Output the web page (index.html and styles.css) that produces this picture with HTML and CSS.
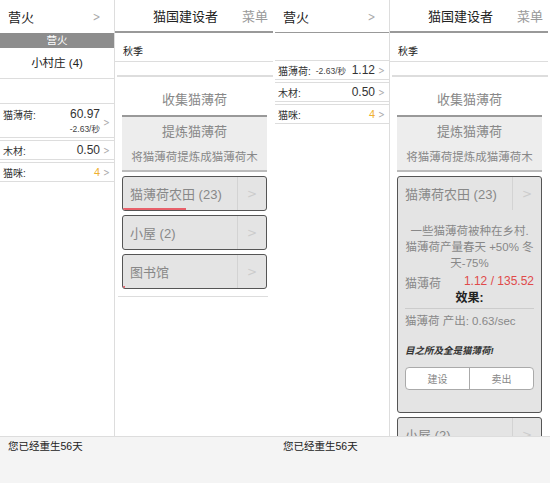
FILE: index.html
```html
<!DOCTYPE html>
<html lang="zh">
<head>
<meta charset="utf-8">
<link rel="stylesheet" href="styles.css">
</head>
<body>
<div class="screens">
  <div class="screen">
    <div class="cols">
      <aside class="side">
        <div class="side-head"><span>营火</span><span class="chev">&gt;</span></div>
        <div class="tab">营火</div>
        <div class="village">小村庄 (4)</div>
        <div class="res-list first">
          <div class="res tall">
            <span class="res-name">猫薄荷:</span>
            <span class="res-vals"><span class="res-val">60.97</span><span class="res-rate">-2.63/秒</span></span>
            <span class="chev small">&gt;</span>
          </div>
          <div class="res">
            <span class="res-name">木材:</span>
            <span class="res-vals"><span class="res-val">0.50</span></span>
            <span class="chev small">&gt;</span>
          </div>
          <div class="res">
            <span class="res-name">猫咪:</span>
            <span class="res-vals"><span class="res-val cat">4</span></span>
            <span class="chev small">&gt;</span>
          </div>
        </div>
      </aside>
      <main class="main">
        <div class="main-head"><span class="title">猫国建设者</span><span class="menu">菜单</span></div>
        <div class="season">秋季</div>
        <div class="blank"></div>
        <div class="content">
          <div class="gather">收集猫薄荷</div>
          <div class="refine">
            <div class="refine-title">提炼猫薄荷</div>
            <div class="refine-desc">将猫薄荷提炼成猫薄荷木</div>
          </div>
          <div class="bld">
            <div class="bld-row"><span class="bld-name">猫薄荷农田 (23)</span><span class="bld-more">&gt;</span></div>
            <div class="progress" style="width:63px"></div>
          </div>
          <div class="bld">
            <div class="bld-row"><span class="bld-name">小屋 (2)</span><span class="bld-more">&gt;</span></div>
          </div>
          <div class="bld">
            <div class="bld-row"><span class="bld-name">图书馆</span><span class="bld-more">&gt;</span></div>
            <div class="progress" style="width:2px"></div>
          </div>
        </div>
        <div class="end-line"></div>
      </main>
    </div>
    <footer class="foot">您已经重生56天</footer>
  </div>

  <div class="screen">
    <div class="cols">
      <aside class="side">
        <div class="side-head lined"><span>营火</span><span class="chev">&gt;</span></div>
        <div class="res-list second">
          <div class="res">
            <span class="res-name">猫薄荷:</span>
            <span class="res-rate inline">-2.63/秒</span>
            <span class="res-vals"><span class="res-val">1.12</span></span>
            <span class="chev small">&gt;</span>
          </div>
          <div class="res">
            <span class="res-name">木材:</span>
            <span class="res-vals"><span class="res-val">0.50</span></span>
            <span class="chev small">&gt;</span>
          </div>
          <div class="res">
            <span class="res-name">猫咪:</span>
            <span class="res-vals"><span class="res-val cat">4</span></span>
            <span class="chev small">&gt;</span>
          </div>
        </div>
      </aside>
      <main class="main">
        <div class="main-head"><span class="title">猫国建设者</span><span class="menu">菜单</span></div>
        <div class="season">秋季</div>
        <div class="blank"></div>
        <div class="content">
          <div class="gather">收集猫薄荷</div>
          <div class="refine">
            <div class="refine-title">提炼猫薄荷</div>
            <div class="refine-desc">将猫薄荷提炼成猫薄荷木</div>
          </div>
          <div class="bld open">
            <div class="bld-row"><span class="bld-name">猫薄荷农田 (23)</span><span class="bld-more">&gt;</span></div>
            <div class="detail">
              <p class="desc">一些猫薄荷被种在乡村.<br>猫薄荷产量春天 +50% 冬<br>天-75%</p>
              <div class="price"><span>猫薄荷</span><span class="need">1.12 / 135.52</span></div>
              <div class="effects">效果:</div>
              <div class="effect">猫薄荷 产出: 0.63/sec</div>
              <div class="flavor">目之所及全是猫薄荷!</div>
              <div class="actions"><span>建设</span><span>卖出</span></div>
            </div>
          </div>
          <div class="bld">
            <div class="bld-row"><span class="bld-name">小屋 (2)</span><span class="bld-more">&gt;</span></div>
          </div>
        </div>
      </main>
    </div>
    <footer class="foot">您已经重生56天</footer>
  </div>
</div>
</body>
</html>
```

FILE: styles.css
```css
* { box-sizing: border-box; }
html, body { margin: 0; padding: 0; background: #fff; }
body {
  font-family: "Liberation Sans", "Noto Sans CJK SC", sans-serif;
  color: #333;
  width: 550px;
  height: 483px;
  overflow: hidden;
}
.screens { display: flex; width: 550px; height: 483px; }
.screen { width: 275px; height: 483px; display: flex; flex-direction: column; }
.cols { flex: 1; display: flex; overflow: hidden; min-height: 0; }
.side { width: 115px; border-right: 1px solid #ddd; flex: none; }
.main { width: 160px; flex: none; padding-right: 2px; overflow: hidden; }

.side-head {
  height: 33px; display: flex; align-items: center; justify-content: space-between;
  padding: 0 12px 0 8px; font-size: 13px; color: #222;
}
.side-head.lined { border-bottom: 1px solid #999; }
.chev { color: #aaa; font-size: 13px; font-family: "DejaVu Sans", sans-serif; transform: scaleX(0.7); }
.chev.small { font-size: 11px; width: 9px; text-align: center; margin-left: 2px; }

.tab { height: 15px; background: #8d8d8d; color: #fff; font-size: 10.5px; text-align: center; line-height: 15px; }
.village { height: 31px; text-align: center; font-size: 11.5px; line-height: 31px; border-bottom: 1px solid #ddd; color: #222; }

.res-list.first { margin-top: 24px; }
.res-list.second { margin-top: 27px; }
.res {
  display: flex; align-items: center; padding: 0 3px 0 3px;
  border-top: 1px solid #ddd; border-bottom: 1px solid #ddd; margin-bottom: 2px;
  height: 20px; font-size: 10px;
}
.res.tall { height: 35px; align-items: flex-start; padding-top: 3px; }
.res.tall .chev { align-self: center; }
.res-name { flex: none; color: #333; }
.res-vals { flex: 1; display: flex; flex-direction: column; align-items: flex-end; }
.res-val { font-size: 12px; color: #333; }
.res-val.cat { color: #f0b030; font-size: 11px; }
.res-rate { font-size: 8.5px; color: #444; margin-top: 1px; }
.res-rate.inline { margin: 0 0 0 5px; }

.main-head {
  height: 33px; display: flex; align-items: center; border-bottom: 2px solid #999;
  font-size: 13px; padding-left: 38px;
}
.title { color: #222; }
.menu { color: #999; margin-left: auto; margin-right: 5px; }
.season { height: 29px; padding: 10px 0 0 8px; font-size: 10px; border-bottom: 1px solid #ddd; color: #222; }
.blank { height: 15px; border-bottom: 2px solid #ddd; margin-left: 2px; }
.content { padding: 0 6px 0 7px; }
.gather {
  height: 40px; line-height: 46px; text-align: center; font-size: 13px; color: #888;
  border-bottom: 2px solid #999;
}
.refine { background: #ededed; height: 55px; border-bottom: 2px solid #bbb; text-align: center; color: #888; }
.refine-title { font-size: 13px; padding-top: 6px; line-height: 18px; }
.refine-desc { font-size: 11.5px; padding-top: 8px; line-height: 16px; }

.bld {
  margin-top: 4px; border: 1.5px solid #555; border-radius: 3px; background: #e4e4e4;
  position: relative; overflow: hidden;
}
.bld-row { height: 33px; display: flex; align-items: center; }
.bld-name { flex: 1; font-size: 13px; color: #888; padding-left: 7px; }
.bld-more {
  width: 29px; height: 100%; border-left: 1px solid #d3d3d3; display: flex; align-items: center;
  justify-content: center; color: #ccc; font-size: 12px; font-family: "DejaVu Sans", sans-serif;
}
.progress { position: absolute; left: 0; bottom: 0; height: 2px; background: #e8606a; }
.end-line { height: 1px; background: #ddd; margin: 7px 5px 0 3px; }

.detail { padding: 13px 7px 22px 7px; color: #888; }
.desc { margin: 0 -2px; text-align: center; font-size: 11.5px; line-height: 16px; }
.price { display: flex; justify-content: space-between; font-size: 12px; margin-top: 3px; }
.need { color: #e04a4a; }
.effects { text-align: center; font-weight: bold; font-size: 12px; color: #222; margin-top: 0; line-height: 14px; }
.effect { border-top: 1px solid #ccc; margin-top: 3px; padding-top: 3px; font-size: 11.5px; }
.flavor { font-size: 9.5px; font-weight: bold; font-style: italic; color: #333; margin-top: 15px; }
.actions {
  display: flex; margin-top: 10px; background: #fff; border: 1px solid #aaa; border-radius: 4px; height: 23px;
}
.actions span { flex: 1; display: flex; align-items: center; justify-content: center; font-size: 10px; color: #888; }
.actions span + span { border-left: 1px solid #aaa; }

.foot {
  height: 47px; flex: none; background: #f4f4f4; border-top: 1px solid #ddd;
  font-size: 10.5px; padding: 1px 0 0 8px; color: #222;
}
```
